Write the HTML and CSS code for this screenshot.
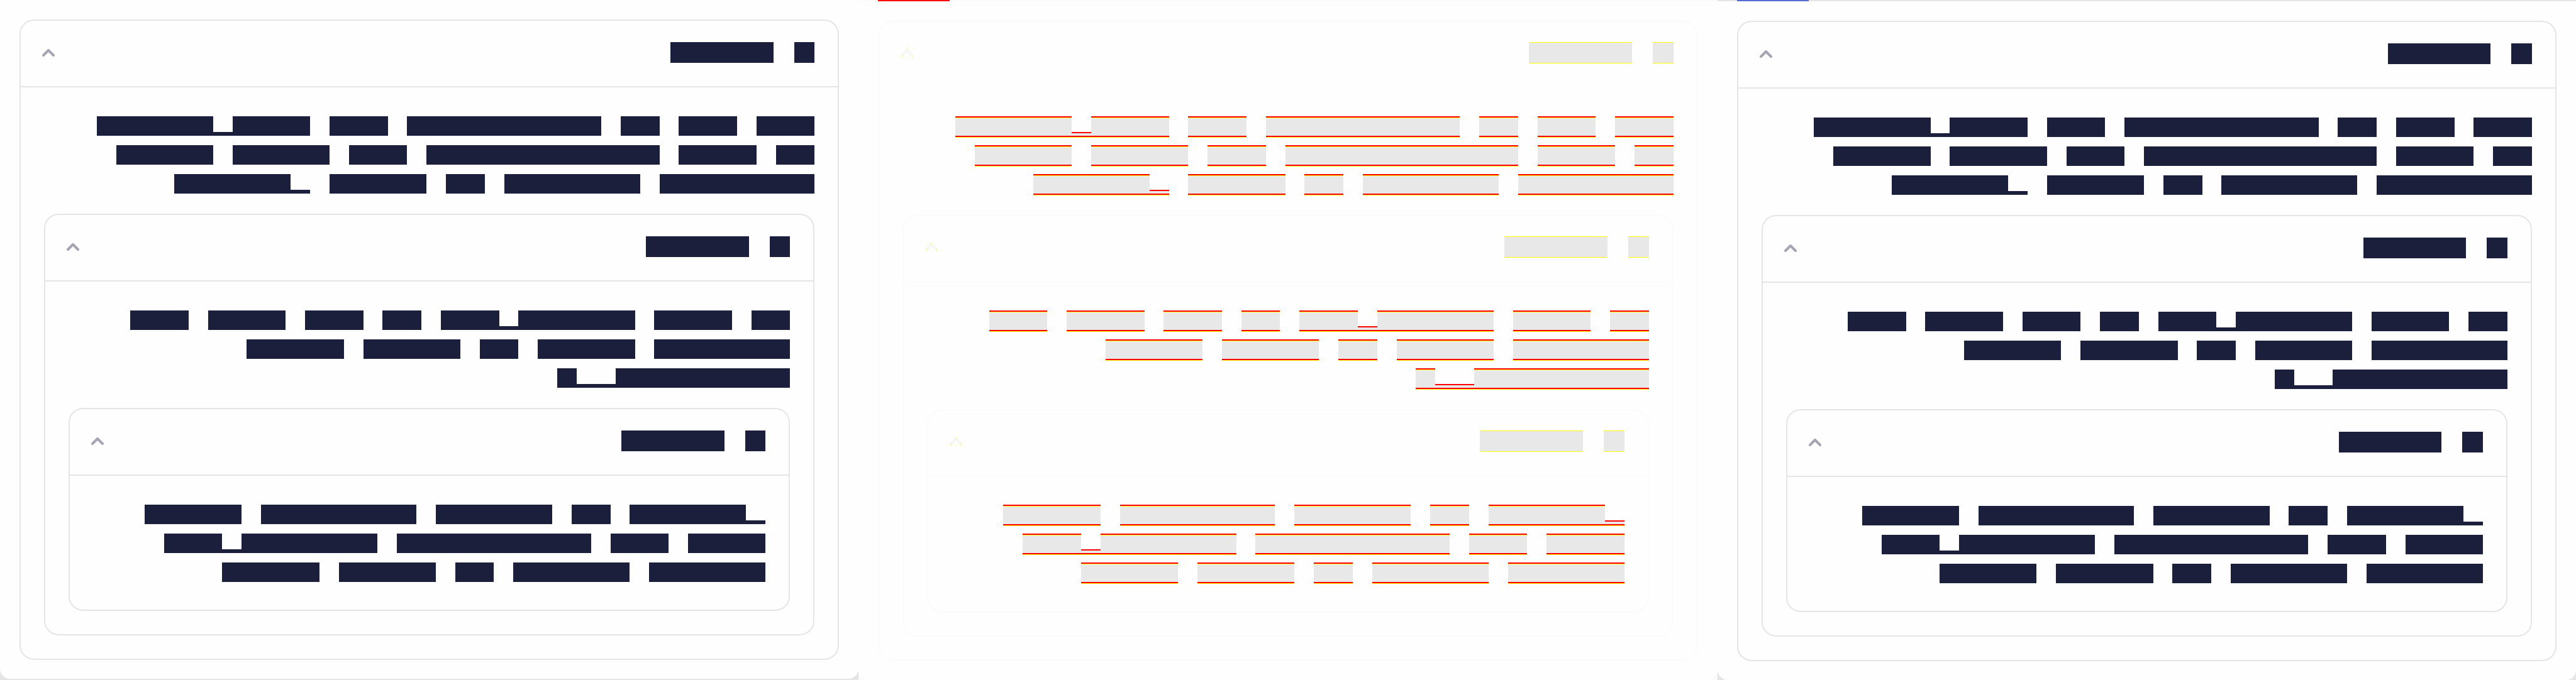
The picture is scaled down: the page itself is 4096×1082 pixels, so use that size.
FILE: index.html
```
<!DOCTYPE html>
<html lang="en">
<head>
<meta charset="utf-8">
<title>Nested accordion comparison</title>
<link rel="stylesheet" href="styles.css">
</head>
<body>
<svg class="symbols" aria-hidden="true">
  <symbol id="chevron" viewBox="0 0 20 12">
    <path class="stroke" d="M2 10L10 2L18 10"/>
    <path class="tips" d="M9 .5h2M1 11.5h2M17 11.5h2"/>
  </symbol>
</svg>
<main class="board">

<section class="panel before"><div class="sheet">
  <article class="card">
    <button class="head" aria-label="Toggle section"><svg class="chevron"><use href="#chevron"/></svg><span class="title"><i class="n5"></i><i class="n1"></i></span></button>
    <div class="body">
      <div class="text">
        <p><b><i class="n6"></i><i class="low"></i><i class="n4"></i></b><i class="n3"></i><i class="n10"></i><i class="n2"></i><i class="n3"></i><i class="n3"></i></p>
        <p><i class="n5"></i><i class="n5"></i><i class="n3"></i><i class="n12"></i><i class="n4"></i><i class="n2"></i></p>
        <p><b><i class="n6"></i><i class="low"></i></b><i class="n5"></i><i class="n2"></i><i class="n7"></i><i class="n8"></i></p>
      </div>
      <article class="card">
        <button class="head" aria-label="Toggle section"><svg class="chevron"><use href="#chevron"/></svg><span class="title"><i class="n5"></i><i class="n1"></i></span></button>
        <div class="body">
          <div class="text">
            <p><i class="n3"></i><i class="n4"></i><i class="n3"></i><i class="n2"></i><b><i class="n3"></i><i class="low"></i><i class="n6"></i></b><i class="n4"></i><i class="n2"></i></p>
            <p><i class="n5"></i><i class="n5"></i><i class="n2"></i><i class="n5"></i><i class="n7"></i></p>
            <p><b><i class="n1"></i><i class="low n2"></i><i class="n9"></i></b></p>
          </div>
          <article class="card">
            <button class="head" aria-label="Toggle section"><svg class="chevron"><use href="#chevron"/></svg><span class="title"><i class="n5"></i><i class="n1"></i></span></button>
            <div class="body leaf">
              <div class="text">
                <p><i class="n5"></i><i class="n8"></i><i class="n6"></i><i class="n2"></i><b><i class="n6"></i><i class="low"></i></b></p>
                <p><b><i class="n3"></i><i class="low"></i><i class="n7"></i></b><i class="n10"></i><i class="n3"></i><i class="n4"></i></p>
                <p><i class="n5"></i><i class="n5"></i><i class="n2"></i><i class="n6"></i><i class="n6"></i></p>
              </div>
            </div>
          </article>
        </div>
      </article>
    </div>
  </article>
</div></section>

<section class="panel diff"><div class="strip"></div><div class="sheet">
  <article class="card">
    <button class="head" aria-label="Toggle section"><svg class="chevron"><use href="#chevron"/></svg><span class="title"><i class="n5"></i><i class="n1"></i></span></button>
    <div class="body">
      <div class="text">
        <p><b><i class="n6"></i><i class="low"></i><i class="n4"></i></b><i class="n3"></i><i class="n10"></i><i class="n2"></i><i class="n3"></i><i class="n3"></i></p>
        <p><i class="n5"></i><i class="n5"></i><i class="n3"></i><i class="n12"></i><i class="n4"></i><i class="n2"></i></p>
        <p><b><i class="n6"></i><i class="low"></i></b><i class="n5"></i><i class="n2"></i><i class="n7"></i><i class="n8"></i></p>
      </div>
      <article class="card">
        <button class="head" aria-label="Toggle section"><svg class="chevron"><use href="#chevron"/></svg><span class="title"><i class="n5"></i><i class="n1"></i></span></button>
        <div class="body">
          <div class="text">
            <p><i class="n3"></i><i class="n4"></i><i class="n3"></i><i class="n2"></i><b><i class="n3"></i><i class="low"></i><i class="n6"></i></b><i class="n4"></i><i class="n2"></i></p>
            <p><i class="n5"></i><i class="n5"></i><i class="n2"></i><i class="n5"></i><i class="n7"></i></p>
            <p><b><i class="n1"></i><i class="low n2"></i><i class="n9"></i></b></p>
          </div>
          <article class="card">
            <button class="head" aria-label="Toggle section"><svg class="chevron"><use href="#chevron"/></svg><span class="title"><i class="n5"></i><i class="n1"></i></span></button>
            <div class="body leaf">
              <div class="text">
                <p><i class="n5"></i><i class="n8"></i><i class="n6"></i><i class="n2"></i><b><i class="n6"></i><i class="low"></i></b></p>
                <p><b><i class="n3"></i><i class="low"></i><i class="n7"></i></b><i class="n10"></i><i class="n3"></i><i class="n4"></i></p>
                <p><i class="n5"></i><i class="n5"></i><i class="n2"></i><i class="n6"></i><i class="n6"></i></p>
              </div>
            </div>
          </article>
        </div>
      </article>
    </div>
  </article>
</div></section>

<section class="panel after"><div class="strip"></div><div class="sheet">
  <article class="card">
    <button class="head" aria-label="Toggle section"><svg class="chevron"><use href="#chevron"/></svg><span class="title"><i class="n5"></i><i class="n1"></i></span></button>
    <div class="body">
      <div class="text">
        <p><b><i class="n6"></i><i class="low"></i><i class="n4"></i></b><i class="n3"></i><i class="n10"></i><i class="n2"></i><i class="n3"></i><i class="n3"></i></p>
        <p><i class="n5"></i><i class="n5"></i><i class="n3"></i><i class="n12"></i><i class="n4"></i><i class="n2"></i></p>
        <p><b><i class="n6"></i><i class="low"></i></b><i class="n5"></i><i class="n2"></i><i class="n7"></i><i class="n8"></i></p>
      </div>
      <article class="card">
        <button class="head" aria-label="Toggle section"><svg class="chevron"><use href="#chevron"/></svg><span class="title"><i class="n5"></i><i class="n1"></i></span></button>
        <div class="body">
          <div class="text">
            <p><i class="n3"></i><i class="n4"></i><i class="n3"></i><i class="n2"></i><b><i class="n3"></i><i class="low"></i><i class="n6"></i></b><i class="n4"></i><i class="n2"></i></p>
            <p><i class="n5"></i><i class="n5"></i><i class="n2"></i><i class="n5"></i><i class="n7"></i></p>
            <p><b><i class="n1"></i><i class="low n2"></i><i class="n9"></i></b></p>
          </div>
          <article class="card">
            <button class="head" aria-label="Toggle section"><svg class="chevron"><use href="#chevron"/></svg><span class="title"><i class="n5"></i><i class="n1"></i></span></button>
            <div class="body leaf">
              <div class="text">
                <p><i class="n5"></i><i class="n8"></i><i class="n6"></i><i class="n2"></i><b><i class="n6"></i><i class="low"></i></b></p>
                <p><b><i class="n3"></i><i class="low"></i><i class="n7"></i></b><i class="n10"></i><i class="n3"></i><i class="n4"></i></p>
                <p><i class="n5"></i><i class="n5"></i><i class="n2"></i><i class="n6"></i><i class="n6"></i></p>
              </div>
            </div>
          </article>
        </div>
      </article>
    </div>
  </article>
</div></section>

</main>
</body>
</html>
```
FILE: styles.css
```
* { box-sizing: border-box; }

body {
  margin: 0;
  background: #fefefe;
  font-family: "Liberation Sans", sans-serif;
}

.symbols { display: none; }

.board {
  display: grid;
  grid-template-columns: repeat(3, 1fr);
  min-height: 100vh;
}

/* Each panel sets its own inks; --unit is the width of one character cell. */
.panel {
  --unit: calc(100vw / 132.75);
  --title-unit: calc(100vw / 125);
  --ink: #1c1f3b;
  --line: #e5e5e5;
  --icon: #a5a4b2;
  display: flex;
  flex-direction: column;
  background: #e5e5e5;
}

.sheet {
  flex: 1;
  padding: 31px 31px 30px;
  border-radius: 0 0 16px 16px;
  background: #fefefe;
}

.before .sheet { margin-bottom: 2px; }

.strip {
  height: 2px;
  padding-left: 31px;
  background: var(--line);
}

.strip::before {
  content: "";
  display: block;
  width: 114px;
  height: 2px;
  background: var(--mark);
}

.card {
  border: 2px solid var(--line);
  border-radius: 23px;
}

.head {
  display: flex;
  align-items: center;
  justify-content: space-between;
  width: 100%;
  padding: 34px 37px 37px 34px;
  border: 0;
  border-bottom: 2px solid var(--line);
  background: none;
  cursor: pointer;
}

.chevron {
  display: block;
  width: 20px;
  height: 12px;
  fill: none;
}

.stroke {
  stroke: var(--icon);
  stroke-width: 4;
  stroke-linecap: round;
  stroke-linejoin: round;
}

.tips { stroke: var(--tips, none); }

.body { padding: 46px 37px 37px; }
.body.leaf { padding-bottom: 44px; }
.body > .card { margin-top: 32px; }

.text {
  display: flex;
  flex-direction: column;
  gap: 15px;
}

.text p,
.title {
  display: flex;
  justify-content: flex-end;
  gap: var(--unit);
  margin: 0;
}

.text b { display: flex; }

.text i {
  flex: none;
  width: calc(var(--n, 1) * var(--unit));
  height: 31px;
  background: var(--ink);
}

.text .low {
  align-self: flex-end;
  height: 6px;
}

.title { gap: var(--title-unit); }

.title i {
  width: calc(var(--n) * var(--title-unit));
  height: 33px;
  background: var(--ink);
}

.n1 { --n: 1; }
.n2 { --n: 2; }
.n3 { --n: 3; }
.n4 { --n: 4; }
.n5 { --n: 5; }
.n6 { --n: 6; }
.n7 { --n: 7; }
.n8 { --n: 8; }
.n9 { --n: 9; }
.n10 { --n: 10; }
.n12 { --n: 12; }

/* Difference view: pale shapes with changed rows in red and yellow. */
.diff {
  --ink: #e8e8e8;
  --line: #fbfbfb;
  --icon: #f6f6f6;
  --tips: #ffff00;
  --mark: #ff0000;
  background: #fbfbfb;
}

.diff .head { padding: 32px 37px 38px 34px; }

.diff .title i {
  height: 34px;
  border: solid #ffff00;
  border-width: 1px 0;
}

.diff .body { padding-top: 44px; }
.diff .body.leaf { padding-bottom: 43px; }
.diff .body > .card { margin-top: 31px; }
.diff .text { gap: 12px; }

.diff .text i {
  height: 34px;
  background: linear-gradient(#ff0000 2px, #ffff00 2px 3px, #e8e8e8 3px 31px, #ff0000 31px 33px, #ffff00 33px);
}

.diff .text .low {
  height: 9px;
  background: linear-gradient(#ff0000 2px, #e8e8e8 2px 6px, #ff0000 6px 8px, #ffff00 8px);
}

.after { --mark: #566bd0; }
```
